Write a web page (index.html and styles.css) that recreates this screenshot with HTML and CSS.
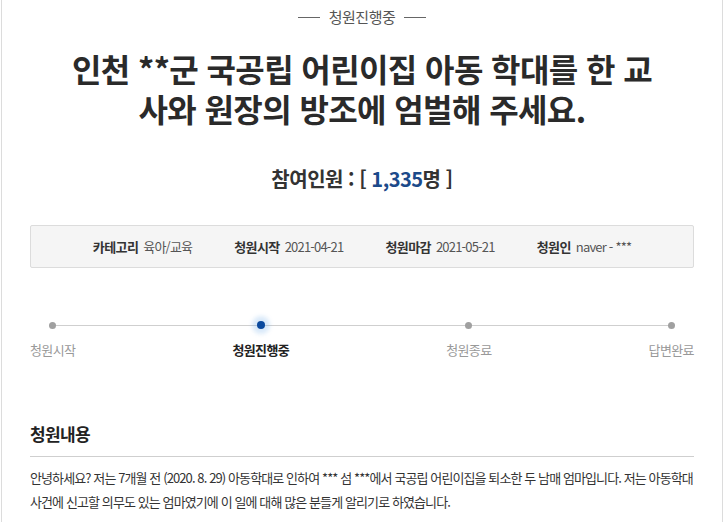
FILE: index.html
```html
<!DOCTYPE html>
<html lang="ko">
<head>
<meta charset="utf-8">
<title>청원</title>
<link rel="stylesheet" href="styles.css">
</head>
<body>
<div class="page">
  <div class="status"><span class="dash"></span><span class="status-text">청원진행중</span><span class="dash"></span></div>
  <h1 class="title">인천 **군 국공립 어린이집 아동 학대를 한 교<br>사와 원장의 방조에 엄벌해 주세요.</h1>
  <div class="count">참여인원 : [ <span class="num">1,335</span>명 ]</div>
  <div class="info">
    <div class="info-item"><span class="k">카테고리</span><span class="v">육아/교육</span></div>
    <div class="info-item"><span class="k">청원시작</span><span class="v">2021-04-21</span></div>
    <div class="info-item"><span class="k">청원마감</span><span class="v">2021-05-21</span></div>
    <div class="info-item"><span class="k">청원인</span><span class="v">naver - ***</span></div>
  </div>
  <div class="steps">
    <div class="step first"><span class="dot"></span><span class="label">청원시작</span></div>
    <div class="step active"><span class="dot"></span><span class="label">청원진행중</span></div>
    <div class="step"><span class="dot"></span><span class="label">청원종료</span></div>
    <div class="step last"><span class="dot"></span><span class="label">답변완료</span></div>
  </div>
  <h2 class="section">청원내용</h2>
  <div class="content">안녕하세요? 저는 7개월 전 (2020. 8. 29) 아동학대로 인하여 *** 섬 ***에서 국공립 어린이집을 퇴소한 두 남매 엄마입니다. 저는 아동학대<br>사건에 신고할 의무도 있는 엄마였기에 이 일에 대해 많은 분들게 알리기로 하였습니다.</div>
</div>
</body>
</html>
```

FILE: styles.css
```css
* { box-sizing: border-box; }
html, body { margin: 0; padding: 0; background: #fff; }
body {
  font-family: "Noto Sans CJK KR", "Noto Sans", sans-serif;
  color: #333;
}
.page {
  margin-left: 1px;
  width: 722px;
  min-height: 522px;
  border-left: 1px solid #dcdcdc;
  border-right: 1px solid #dcdcdc;
  padding: 6px 28px 0 28px;
}
.status {
  display: flex;
  justify-content: center;
  align-items: center;
  gap: 9px;
  font-size: 15px;
  line-height: 22px;
  color: #555;
  letter-spacing: -0.5px;
}
.dash { width: 22px; height: 1px; background: #666; }
.title {
  margin: 20px 0 0 0;
  text-align: center;
  font-size: 32px;
  line-height: 40px;
  font-weight: 700;
  color: #2a2a2a;
  letter-spacing: -0.6px;
}
.count {
  margin-top: 37px;
  text-align: center;
  font-size: 20px;
  line-height: 28px;
  font-weight: 700;
  color: #333;
  letter-spacing: -0.5px;
}
.num { color: #1c4a8a; }
.info {
  margin-top: 32px;
  height: 43px;
  background: #f5f5f5;
  border: 1px solid #dcdcdc;
  border-radius: 2px;
  display: flex;
  justify-content: center;
  align-items: center;
  gap: 42px;
  font-size: 13px;
  letter-spacing: -0.6px;
}
.info-item { display: flex; gap: 5px; align-items: baseline; }
.info-item .k { font-weight: 700; color: #333; }
.info-item .v { color: #555; letter-spacing: -0.8px; }
.steps {
  position: relative;
  margin-top: 53px;
  display: flex;
  justify-content: space-between;
}
.steps::before {
  content: "";
  position: absolute;
  left: 21px;
  right: 23px;
  top: 4px;
  height: 1px;
  background: #cfcfcf;
}
.step {
  position: relative;
  display: flex;
  flex-direction: column;
  align-items: center;
  gap: 12px;
}
.dot {
  width: 7px;
  height: 7px;
  border-radius: 50%;
  background: #a0a0a0;
  margin-top: 1px;
}
.label {
  font-size: 13px;
  line-height: 18px;
  color: #999;
  letter-spacing: -0.6px;
}
.active .dot {
  width: 8px;
  height: 8px;
  margin-top: 0;
  background: #0b4a9e;
  box-shadow: 0 0 4px 5px rgba(120, 175, 235, 0.28);
}
.active .label { color: #222; font-weight: 700; }
.section {
  margin: 63px 0 0 0;
  padding-bottom: 10px;
  border-bottom: 1px solid #cfcfcf;
  font-size: 17px;
  line-height: 24px;
  font-weight: 700;
  color: #222;
  letter-spacing: -0.6px;
}
.content {
  margin-top: 9px;
  font-size: 13px;
  line-height: 24px;
  color: #333;
  letter-spacing: -0.9px;
  white-space: nowrap;
}
```
